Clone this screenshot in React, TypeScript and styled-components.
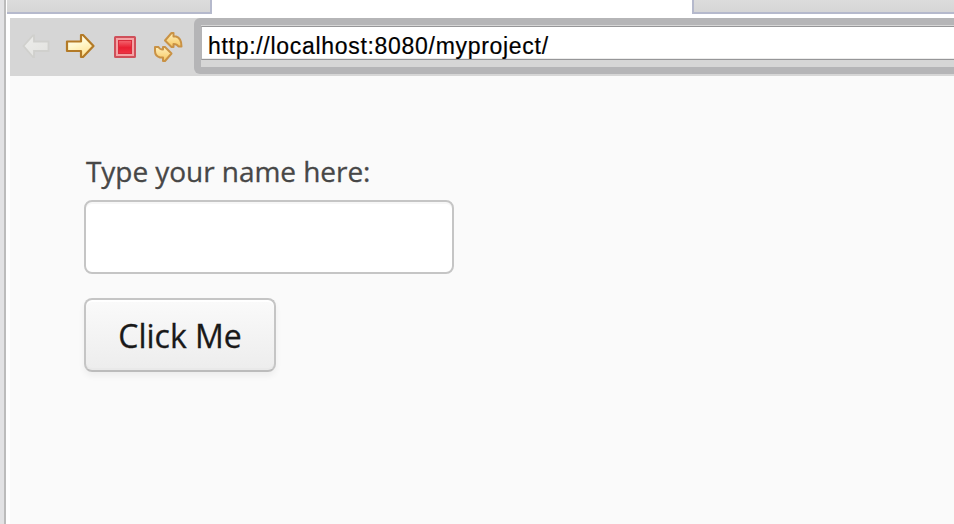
import React from "react";
import styled, { createGlobalStyle } from "styled-components";

const GlobalStyle = createGlobalStyle`
  *, *::before, *::after { box-sizing: border-box; }
  body { margin: 0; overflow: hidden; background: #fff; }
`;

const Window = styled.div`
  display: grid;
  grid-template-columns: 6px 1fr;
  width: 954px;
  height: 524px;
  overflow: hidden;
  background: #fff;
`;

const Sash = styled.div`
  background: #e3e3e5;
  border-right: 2px solid #bcbcbc;
`;

const Editor = styled.div`
  display: flex;
  flex-direction: column;
  min-width: 0;
`;

const TabStrip = styled.div`
  display: grid;
  grid-template-columns: 205px 1fr 262px;
  height: 14px;
  margin-left: 1px;
`;

const Tab = styled.div<{ $side: "left" | "right" }>`
  background: linear-gradient(#dcdcdc, #d6d6d6);
  border-bottom: 2px solid #b5b9cc;
  border-${(p) => (p.$side === "left" ? "right" : "left")}: 2px solid #b5b9cc;
`;

const ActiveTab = styled.div`
  background: #fff;
`;

const Browser = styled.div`
  display: flex;
  flex-direction: column;
  flex: 1;
  margin: 4px 0 0 4px;
  background: #fafafa;
`;

const Toolbar = styled.div`
  display: flex;
  height: 58px;
  background: #d6d6d6;
`;

const Tools = styled.div`
  display: grid;
  grid-template-columns: 48px 44px 44px 48px;
  width: 184px;
`;

const ToolButton = styled.button`
  display: flex;
  align-items: flex-start;
  padding: 8px 0 0;
  border: 0;
  background: none;
  svg { display: block; flex: none; }
`;

const AddressFrame = styled.div`
  flex: 1;
  height: 56px;
  padding: 7px 0 7px 7px;
  background: #b5b5b7;
  border-radius: 6px 0 0 6px;
`;

const AddressWell = styled.div`
  height: 42px;
  padding-top: 1px;
  background: #d6d6d6;
`;

const Address = styled.div`
  height: 34px;
  padding-left: 6px;
  border: 1px solid #969698;
  border-left-color: #b4b4b6;
  border-right: 0;
  background: #fff;
  box-shadow: inset 0 -1px #ececec;
  color: #000;
  font: 23px/38px "Liberation Sans", Arial, sans-serif;
  letter-spacing: 0.7px;
  -webkit-text-stroke: 0.2px #000;
  white-space: nowrap;
`;

const Page = styled.main`
  display: flex;
  flex-direction: column;
  align-items: flex-start;
  padding: 75px 0 0 74px;
  font-family: "Open Sans", sans-serif;
`;

const Label = styled.label`
  height: 49px;
  padding-left: 2px;
  color: #474747;
  font-size: 28px;
  line-height: 40px;
  letter-spacing: -0.05px;
  -webkit-text-stroke: 0.3px #474747;
  white-space: nowrap;
`;

const NameField = styled.input`
  width: 370px;
  height: 74px;
  padding: 0 12px;
  border: 2px solid #c5c5c5;
  border-radius: 8px;
  background: #fff;
  box-shadow: inset 0 2px 0 #f7f7f7;
  outline: none;
  font: inherit;
`;

const ClickButton = styled.button`
  width: 192px;
  height: 74px;
  margin-top: 24px;
  padding: 1px 0 0;
  border: 2px solid #c5c5c5;
  border-bottom-color: #bcbcbc;
  border-radius: 8px;
  background: linear-gradient(#fafafa 2%, #ededed 98%);
  box-shadow: inset 0 2px 0 #fff, inset 0 -2px 0 #e9e9e9, 0 4px 6px rgba(0, 0, 0, 0.05);
  color: #191919;
  font: 32px/44px "Open Sans", sans-serif;
  -webkit-text-stroke: 0.3px #191919;
  white-space: nowrap;
`;

const BackIcon = () => (
  <svg width="48" height="40" viewBox="10 26 48 40">
    <defs>
      <linearGradient id="back" x1="0" y1="0" x2="1" y2="1">
        <stop offset="0" stopColor="#ededeb" />
        <stop offset="1" stopColor="#e2e2df" />
      </linearGradient>
    </defs>
    <path d="M23.5 46 33 35.5H34V41.5H48.5V51H34V57H33Z" fill="url(#back)" stroke="#d0d0cd" strokeWidth="1.8" />
  </svg>
);

const ForwardIcon = () => (
  <svg width="44" height="40" viewBox="58 26 44 40">
    <defs>
      <linearGradient id="forward" x1="0" y1="0" x2="0.4" y2="1">
        <stop offset="0" stopColor="#ffffff" />
        <stop offset="0.5" stopColor="#fff8cf" />
        <stop offset="1" stopColor="#ffe49a" />
      </linearGradient>
    </defs>
    <path d="M67 41.5H81V35H83L93.5 46 83 57H81V51H67Z" fill="url(#forward)" stroke="#b37a26" strokeWidth="2.2" strokeLinejoin="round" />
  </svg>
);

const StopIcon = () => (
  <svg width="44" height="40" viewBox="102 26 44 40">
    <defs>
      <linearGradient id="stop" x1="0" y1="0" x2="0" y2="1">
        <stop offset="0" stopColor="#f3656f" />
        <stop offset="0.55" stopColor="#e91f32" />
        <stop offset="1" stopColor="#ef3343" />
      </linearGradient>
    </defs>
    <rect x="115" y="37" width="20" height="20" rx="0.5" fill="#f4a3a5" stroke="#cf505a" strokeWidth="2" />
    <rect x="118.5" y="40.5" width="13" height="13" fill="url(#stop)" stroke="#d92c3c" />
  </svg>
);

const RefreshIcon = () => (
  <svg width="48" height="40" viewBox="146 26 48 40">
    <defs>
      <linearGradient id="refresh" x1="0" y1="0" x2="0" y2="1">
        <stop offset="0" stopColor="#fff0bc" />
        <stop offset="1" stopColor="#f6c760" />
      </linearGradient>
    </defs>
    <g fill="url(#refresh)" stroke="#c99245" strokeWidth="2" strokeLinejoin="round">
      <path d="M165 40.500 171.500 33H173.500V36.500H176Q181.500 38 181.500 46.500H178.500Q177 44 173.500 44V47H171.500Z" />
      <path d="M155 47H158.500Q159.500 49.500 163 49.500V47H165L171.500 53.500 165 61H163V57.500H160Q155 56 155 51Z" />
    </g>
  </svg>
);

export default function App() {
  return (
    <>
      <GlobalStyle />
      <Window>
        <Sash />
        <Editor>
          <TabStrip>
            <Tab $side="left" />
            <ActiveTab />
            <Tab $side="right" />
          </TabStrip>
          <Browser>
            <Toolbar>
              <Tools>
                <ToolButton aria-label="Back" disabled><BackIcon /></ToolButton>
                <ToolButton aria-label="Forward"><ForwardIcon /></ToolButton>
                <ToolButton aria-label="Stop"><StopIcon /></ToolButton>
                <ToolButton aria-label="Refresh"><RefreshIcon /></ToolButton>
              </Tools>
              <AddressFrame>
                <AddressWell>
                  <Address>http://localhost:8080/myproject/</Address>
                </AddressWell>
              </AddressFrame>
            </Toolbar>
            <Page>
              <Label htmlFor="name">Type your name here:</Label>
              <NameField id="name" type="text" />
              <ClickButton type="button">Click Me</ClickButton>
            </Page>
          </Browser>
        </Editor>
      </Window>
    </>
  );
}
